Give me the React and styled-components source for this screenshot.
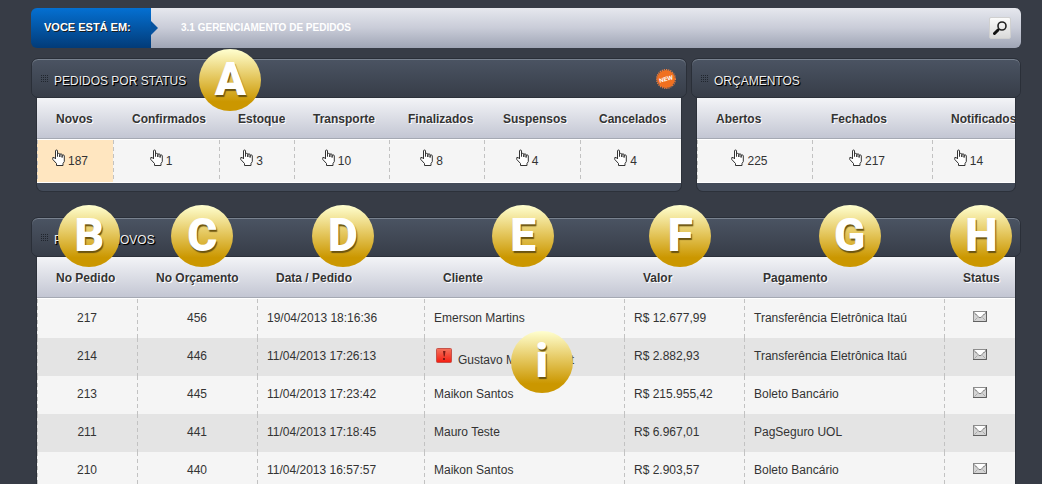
import React from "react";
import styled, { createGlobalStyle } from "styled-components";

const GlobalStyle = createGlobalStyle`
  * { box-sizing: border-box; }
  body {
    margin: 0;
    background: #373c46;
    color: #333;
    font: 12px/16px "Liberation Sans", Arial, sans-serif;
  }
`;

const Page = styled.main`
  padding: 8px 21px 0 31px;
`;

const LocationBar = styled.nav`
  display: flex;
  align-items: center;
  height: 40px;
  padding-right: 10px;
  border-radius: 10px 6px 6px 10px;
  background: linear-gradient(#e6e8ee, #c9ccd8 50%, #9fa5b5);
`;

const Here = styled.div`
  position: relative;
  width: 120px;
  height: 40px;
  padding-left: 13px;
  border-radius: 6px 0 0 6px;
  background: linear-gradient(#0470d2, #023b78);
  color: #fff;
  font-size: 11px;
  font-weight: bold;
  line-height: 39px;
  text-shadow: 1px 1px 0 #1b1b1b;
  &::after {
    content: "";
    position: absolute;
    left: 100%;
    top: 13px;
    border: solid transparent;
    border-width: 7px 0 7px 7px;
    border-left-color: #07539f;
  }
`;

const Crumb = styled.a`
  flex: 1;
  padding-left: 30px;
  color: #fff;
  font-size: 10px;
  font-weight: bold;
  text-decoration: none;
`;

const SearchButton = styled.button`
  display: grid;
  place-items: center;
  width: 22px;
  height: 22px;
  padding: 0;
  border: 1px solid #d0d0d0;
  border-radius: 2px;
  background: linear-gradient(#fbfbfb, #d9d9d9);
`;

const Panels = styled.div`
  display: grid;
  grid-template-columns: 656fr 330fr;
  gap: 4px;
  padding-top: 10px;
`;

const Panel = styled.section`
  position: relative;
  min-width: 0;
`;

const OrdersPanel = styled(Panel)`
  margin-top: 26px;
`;

const PanelHeader = styled.header`
  display: flex;
  align-items: center;
  height: 40px;
  padding: 2px 10px 0 9px;
  border: 1px solid #2a2f38;
  border-radius: 7px;
  background: linear-gradient(#4b5463, #373d48);
  box-shadow: inset 0 1px 0 #79828f;
`;

const Grip = styled.span`
  width: 7px;
  height: 8px;
  margin-right: 6px;
  background: radial-gradient(circle at 0 0, #20252d 1px, transparent 1px) 0 0 / 2px 2px;
`;

const Title = styled.h2`
  flex: 1;
  margin: 0;
  padding-top: 4px;
  color: #eee;
  font-size: 12px;
  font-weight: normal;
  text-shadow: 1px 1px 0 #000, 1px 1px 1px #000;
`;

const PanelBody = styled.div`
  margin: 0 6px;
  overflow: hidden;
  border-bottom: ${(p) => (p.$footer ? "8px solid #434b59" : "0")};
  border-radius: ${(p) => (p.$footer ? "0 0 6px 6px" : "0")};
  box-shadow: 0 0 0 1px #2c313a;
`;

const Table = styled.table`
  width: 100%;
  table-layout: fixed;
  border-collapse: separate;
  border-spacing: 0;
`;

const Th = styled.th`
  height: 42px;
  padding: 0 0 0 19px;
  border-bottom: 1px solid #fff;
  background: linear-gradient(#f3f4f7, #c3c6d3 40px, #a5a9b3 40px);
  text-align: left;
  white-space: nowrap;
  text-shadow: 1px 1px 0 #fff;
`;

const dashes = "repeating-linear-gradient(#c2c2c2 0 4px, transparent 4px 7px) 0 0 / 1px 100% no-repeat";

const StatusCell = styled.td`
  height: 43px;
  padding: 0 10px 4px 0;
  border-bottom: 1px solid #fff;
  background: ${dashes}, ${(p) => (p.$active ? "#ffe6c0" : "#f5f5f5")};
`;

const Count = styled.div`
  display: flex;
  align-items: flex-start;
  justify-content: center;
  gap: 3px;
  span { padding-top: 4px; }
`;

const Cell = styled.td`
  height: 38px;
  padding: 0 0 2px ${(p) => (p.$center ? "0" : "10px")};
  background: ${dashes};
  text-align: ${(p) => (p.$center ? "center" : "left")};
  white-space: nowrap;
`;

const Row = styled.tr`
  background: #f5f5f5;
  &:nth-child(even) { background: #e4e4e4; }
  &:first-child ${Cell} { height: 39px; }
`;

const Client = styled.span`
  display: flex;
  align-items: center;
  gap: 6px;
  padding-left: 2px;
  span { padding-top: 8px; }
`;

const Marker = styled.span`
  position: absolute;
  z-index: 1;
  left: ${(p) => p.$x}%;
  top: ${(p) => p.$y}px;
  width: 62px;
  height: 62px;
  margin-left: -31px;
  border-radius: 50%;
  background: linear-gradient(#ffffd0, #e5c860 45%, #cb9700 85%);
  color: #fff;
  font: 900 46px/60px Roboto, "Liberation Sans", sans-serif;
  text-align: center;
  text-shadow: 1px 2px 1px #6b5410;
`;

function Hand() {
  return (
    <svg width="13" height="17" viewBox="0 0 13 17" aria-hidden="true">
      <path
        d="M3.5 10V2a1 1 0 0 1 2 0V7.500V5.500a1 1 0 0 1 2.300 0V8V6a1 1 0 0 1 2.300 0V8.500V7a1 1 0 0 1 2.200 0V12.500L11 14.500V16.500H4.500V14.500L.8 10.500V8.500H2.300Z"
        fill="#fff"
        stroke="#333"
        strokeWidth="1"
      />
    </svg>
  );
}

function Envelope() {
  return (
    <svg width="14" height="11" viewBox="0 0 14 11" role="img" aria-label="Mensagem">
      <rect width="14" height="11" fill="#8d8d8d" />
      <path d="M1 1H13V10H1Z" fill="#d4d4d4" />
      <path d="M1.500 1H12.500L7 6.500Z" fill="#fff" />
      <path d="M1 1.500L6 6.500H8L13 1.500" fill="none" stroke="#666" strokeDasharray="1.500 .6" />
      <path d="M1.500 9.500L4.500 6.500M12.500 9.500L9.500 6.500" fill="none" stroke="#aaa" />
      <path d="M13.500 0V10.500H0" fill="none" stroke="#606060" />
    </svg>
  );
}

function Alert() {
  return (
    <svg width="16" height="16" viewBox="0 0 16 16" role="img" aria-label="Alerta">
      <defs>
        <linearGradient id="alert" x2="0" y2="1">
          <stop stopColor="#f4735c" />
          <stop offset="1" stopColor="#f51c10" />
        </linearGradient>
      </defs>
      <rect x=".5" y=".5" width="15" height="14" rx="1" fill="url(#alert)" stroke="#c5524a" />
      <path d="M7 3H9.500L8.700 8.500H7.800ZM7 10H9V12H7Z" fill="#7d1a14" />
    </svg>
  );
}

function NewBadge() {
  return (
    <svg width="20" height="20" viewBox="0 0 20 20" role="img" aria-label="New">
      <circle cx="10" cy="10" r="9" fill="#f07020" />
      <circle cx="10" cy="10" r="9.400" fill="none" stroke="#f08040" strokeWidth="1.200" strokeDasharray="1.200 1" />
      <text x="10" y="12" fill="#fff" fontSize="6" fontWeight="bold" textAnchor="middle" transform="rotate(-14 10 10)">
        NEW
      </text>
    </svg>
  );
}

function Magnifier() {
  return (
    <svg width="14" height="14" viewBox="0 0 14 14" aria-hidden="true">
      <circle cx="9" cy="5" r="4" fill="none" stroke="#222" strokeWidth="1.600" />
      <path d="M6 8L4.500 9.500" stroke="#222" strokeWidth="1.500" />
      <path d="M4.800 9.200L1.500 12.500" stroke="#111" strokeWidth="3" strokeLinecap="round" />
    </svg>
  );
}

function Columns({ widths }) {
  const total = widths.reduce((a, b) => a + b, 0);
  return (
    <colgroup>
      {widths.map((w, i) => (
        <col key={i} style={{ width: `${(w / total) * 100}%` }} />
      ))}
    </colgroup>
  );
}

function StatusTable({ columns, active }) {
  return (
    <Table>
      <Columns widths={columns.map((c) => c[2])} />
      <thead>
        <tr>{columns.map(([name]) => <Th key={name} scope="col">{name}</Th>)}</tr>
      </thead>
      <tbody>
        <tr>
          {columns.map(([name, count]) => (
            <StatusCell key={name} $active={name === active}>
              <Count><Hand /><span>{count}</span></Count>
            </StatusCell>
          ))}
        </tr>
      </tbody>
    </Table>
  );
}

const statuses = [
  ["Novos", 187, 76], ["Confirmados", 1, 106], ["Estoque", 3, 75], ["Transporte", 10, 95],
  ["Finalizados", 8, 95], ["Suspensos", 4, 96], ["Cancelados", 4, 101],
];
const quotes = [["Abertos", 225, 115], ["Fechados", 217, 120], ["Notificados", 14, 83]];
const orderColumns = ["No Pedido", "No Orçamento", "Data / Pedido", "Cliente", "Valor", "Pagamento", "Status"];
const orders = [
  [217, 456, "19/04/2013 18:16:36", "Emerson Martins", "R$ 12.677,99", "Transferência Eletrônica Itaú"],
  [214, 446, "11/04/2013 17:26:13", "Gustavo Martins Hunt", "R$ 2.882,93", "Transferência Eletrônica Itaú", true],
  [213, 445, "11/04/2013 17:23:42", "Maikon Santos", "R$ 215.955,42", "Boleto Bancário"],
  [211, 441, "11/04/2013 17:18:45", "Mauro Teste", "R$ 6.967,01", "PagSeguro UOL"],
  [210, 440, "11/04/2013 16:57:57", "Maikon Santos", "R$ 2.903,57", "Boleto Bancário"],
];
const markers = [["B", 5.9], ["C", 17.3], ["D", 31.5], ["E", 49.7], ["F", 65.6], ["G", 82.7], ["H", 96]];

export default function App() {
  return (
    <>
      <GlobalStyle />
      <Page>
        <LocationBar>
          <Here>VOCE ESTÁ EM:</Here>
          <Crumb href="#pedidos">3.1 GERENCIAMENTO DE PEDIDOS</Crumb>
          <SearchButton type="button" aria-label="Buscar"><Magnifier /></SearchButton>
        </LocationBar>
        <Panels>
          <Panel>
            <PanelHeader><Grip /><Title>PEDIDOS POR STATUS</Title><NewBadge /></PanelHeader>
            <PanelBody $footer><StatusTable columns={statuses} active="Novos" /></PanelBody>
            <Marker $x={30.4} $y={-9}>A</Marker>
          </Panel>
          <Panel>
            <PanelHeader><Grip /><Title>ORÇAMENTOS</Title></PanelHeader>
            <PanelBody $footer><StatusTable columns={quotes} /></PanelBody>
          </Panel>
        </Panels>
        <OrdersPanel id="pedidos">
          <PanelHeader><Grip /><Title>PEDIDOS NOVOS</Title></PanelHeader>
          <PanelBody>
            <Table>
              <Columns widths={[100, 120, 167, 200, 120, 200, 71]} />
              <thead>
                <tr>{orderColumns.map((name) => <Th key={name} scope="col">{name}</Th>)}</tr>
              </thead>
              <tbody>
                {orders.map(([order, quote, date, client, value, payment, alert]) => (
                  <Row key={order}>
                    <Cell $center>{order}</Cell>
                    <Cell $center>{quote}</Cell>
                    <Cell>{date}</Cell>
                    <Cell>{alert ? <Client><Alert /><span>{client}</span></Client> : client}</Cell>
                    <Cell>{value}</Cell>
                    <Cell>{payment}</Cell>
                    <Cell $center><Envelope /></Cell>
                  </Row>
                ))}
              </tbody>
            </Table>
          </PanelBody>
          {markers.map(([letter, x]) => <Marker key={letter} $x={x} $y={-12}>{letter}</Marker>)}
          <Marker $x={51.6} $y={114}>i</Marker>
        </OrdersPanel>
      </Page>
    </>
  );
}
